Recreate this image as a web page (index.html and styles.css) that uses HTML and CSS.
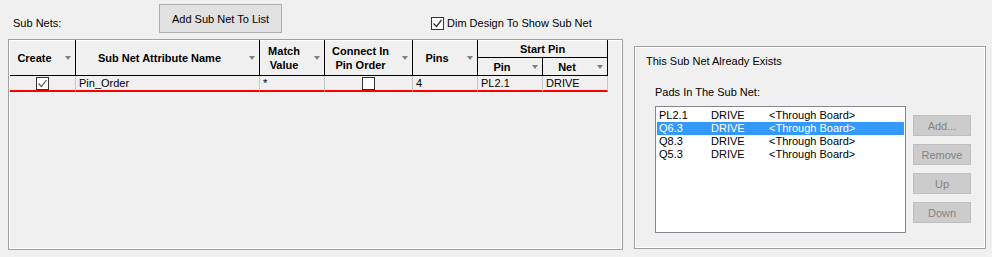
FILE: index.html
```html
<!DOCTYPE html>
<html lang="en">
<head>
  <meta charset="UTF-8" />
  <title>Sub Nets</title>
  <link rel="stylesheet" href="styles.css">
</head>
<body>
  <div class="top-bar">
    <span class="sub-nets-label">Sub Nets:</span>
    <button class="win-button add-button" type="button">Add Sub Net To List</button>
    <label class="dim-check">
      <span class="check-box">
        <svg width="11" height="11" viewBox="0 0 11 11"><path d="M1.5 5.5 L4.5 8.5 L9.5 2" fill="none" stroke="#333" stroke-width="1.3"/></svg>
      </span>
      Dim Design To Show Sub Net
    </label>
  </div>

  <div class="main">
    <div class="grid-box">
      <table class="grid">
        <colgroup>
          <col style="width:66px">
          <col style="width:184px">
          <col style="width:65px">
          <col style="width:88px">
          <col style="width:65px">
          <col style="width:65px">
          <col style="width:65px">
        </colgroup>
        <thead>
          <tr class="head-top">
            <th rowspan="2" class="sortable">Create</th>
            <th rowspan="2" class="sortable">Sub Net Attribute Name</th>
            <th rowspan="2" class="sortable">Match<br>Value</th>
            <th rowspan="2" class="sortable">Connect In<br>Pin Order</th>
            <th rowspan="2" class="sortable">Pins</th>
            <th colspan="2" class="group-head">Start Pin</th>
          </tr>
          <tr class="head-sub">
            <th class="sortable">Pin</th>
            <th class="sortable">Net</th>
          </tr>
        </thead>
        <tbody>
          <tr class="current">
            <td class="center">
              <span class="check-box cell-check">
                <svg width="11" height="11" viewBox="0 0 11 11"><path d="M1.5 5.5 L4.5 8.5 L9.5 2" fill="none" stroke="#555" stroke-width="1.2"/></svg>
              </span>
            </td>
            <td>Pin_Order</td>
            <td>*</td>
            <td class="center"><span class="check-box cell-check"></span></td>
            <td>4</td>
            <td>PL2.1</td>
            <td>DRIVE</td>
          </tr>
        </tbody>
      </table>
    </div>

    <div class="group">
      <div class="group-title">This Sub Net Already Exists</div>
      <div class="pads-label">Pads In The Sub Net:</div>
      <div class="pads-row">
        <ul class="pad-list">
          <li><span>PL2.1</span><span>DRIVE</span><span>&lt;Through Board&gt;</span></li>
          <li class="selected"><span>Q6.3</span><span>DRIVE</span><span>&lt;Through Board&gt;</span></li>
          <li><span>Q8.3</span><span>DRIVE</span><span>&lt;Through Board&gt;</span></li>
          <li><span>Q5.3</span><span>DRIVE</span><span>&lt;Through Board&gt;</span></li>
        </ul>
        <div class="side-buttons">
          <button class="win-button" type="button" disabled>Add...</button>
          <button class="win-button" type="button" disabled>Remove</button>
          <button class="win-button" type="button" disabled>Up</button>
          <button class="win-button" type="button" disabled>Down</button>
        </div>
      </div>
    </div>
  </div>
</body>
</html>
```

FILE: styles.css
```css
:root {
  --face: #f0f0f0;
  --edge: #a0a0a0;
  --cell-line: #c8c8c8;
  --select: #3399ff;
  --ui-font: "Liberation Sans", Arial, sans-serif;
}

body {
  margin: 0;
  width: 992px;
  height: 257px;
  background: var(--face);
  color: #000;
  font-family: var(--ui-font);
  font-size: 11px;
  line-height: 13px;
  overflow: hidden;
}

.top-bar {
  display: flex;
  align-items: flex-start;
  height: 39px;
  padding-left: 13px;
  box-sizing: border-box;
}

.sub-nets-label {
  width: 146px;
  margin-top: 17px;
}

.win-button {
  font-family: var(--ui-font);
  font-size: 11px;
  color: #000;
  background: #e1e1e1;
  border: 1px solid #adadad;
  padding: 0;
  box-sizing: border-box;
}

.win-button:disabled {
  background: #cccccc;
  border-color: #bfbfbf;
  color: #838383;
}

.add-button {
  width: 123px;
  height: 29px;
  margin-top: 4px;
}

.dim-check {
  display: flex;
  align-items: center;
  gap: 3px;
  margin-left: 149px;
  margin-top: 17px;
}

.check-box {
  display: inline-flex;
  align-items: center;
  justify-content: center;
  width: 13px;
  height: 13px;
  border: 1px solid #333;
  background: #fff;
  box-sizing: border-box;
}

.main {
  display: flex;
  align-items: flex-start;
}

.grid-box {
  width: 615px;
  height: 211px;
  margin-left: 8px;
  padding-left: 1px;
  border: 1px solid var(--edge);
  box-shadow: inset 0 0 0 1px #fff;
  box-sizing: border-box;
}

.grid {
  table-layout: fixed;
  width: 598px;
  border-collapse: separate;
  border-spacing: 0;
}

.grid th {
  position: relative;
  padding: 0 16px 0 0;
  border-right: 1px solid #000;
  border-bottom: 1px solid #000;
  font-weight: bold;
  line-height: 14px;
  text-align: center;
}

.head-top th,
.head-sub th {
  height: 17px;
}

.grid th.group-head {
  padding-right: 0;
}

.grid th.sortable::after {
  content: "";
  position: absolute;
  right: 4px;
  top: 50%;
  margin-top: -2px;
  border-left: 3.5px solid transparent;
  border-right: 3.5px solid transparent;
  border-top: 4px solid #808080;
}

.grid td {
  height: 14px;
  padding: 0 0 0 3px;
  border-right: 1px solid var(--cell-line);
  border-bottom: 2px solid #ff0000;
  line-height: 14px;
  white-space: nowrap;
}

.grid td.center {
  padding: 0;
  vertical-align: top;
}

.cell-check {
  display: flex;
  margin: 1px auto 0;
}

.group {
  width: 352px;
  height: 203px;
  margin-top: 7px;
  margin-left: 11px;
  padding: 8px 0 0 11px;
  border: 1px solid var(--edge);
  box-shadow: inset 0 0 0 1px #fff;
  box-sizing: border-box;
}

.pads-label {
  margin: 18px 0 0 9px;
}

.pads-row {
  display: flex;
  align-items: flex-start;
  margin: 7px 0 0 9px;
}

.pad-list {
  list-style: none;
  margin: 0;
  padding: 1px;
  width: 251px;
  height: 127px;
  border: 1px solid #828790;
  background: #fff;
  box-sizing: border-box;
}

.pad-list li {
  display: flex;
  height: 13px;
  padding-left: 2px;
  line-height: 13px;
}

.pad-list li:first-child {
  margin-top: 1px;
}

.pad-list li span:nth-child(1) {
  width: 52px;
}

.pad-list li span:nth-child(2) {
  width: 58px;
}

.pad-list li.selected {
  background: var(--select);
  color: #fff;
}

.side-buttons {
  display: flex;
  flex-direction: column;
  gap: 8px;
  margin: 9px 0 0 7px;
}

.side-buttons .win-button {
  width: 58px;
  height: 21px;
}
```
